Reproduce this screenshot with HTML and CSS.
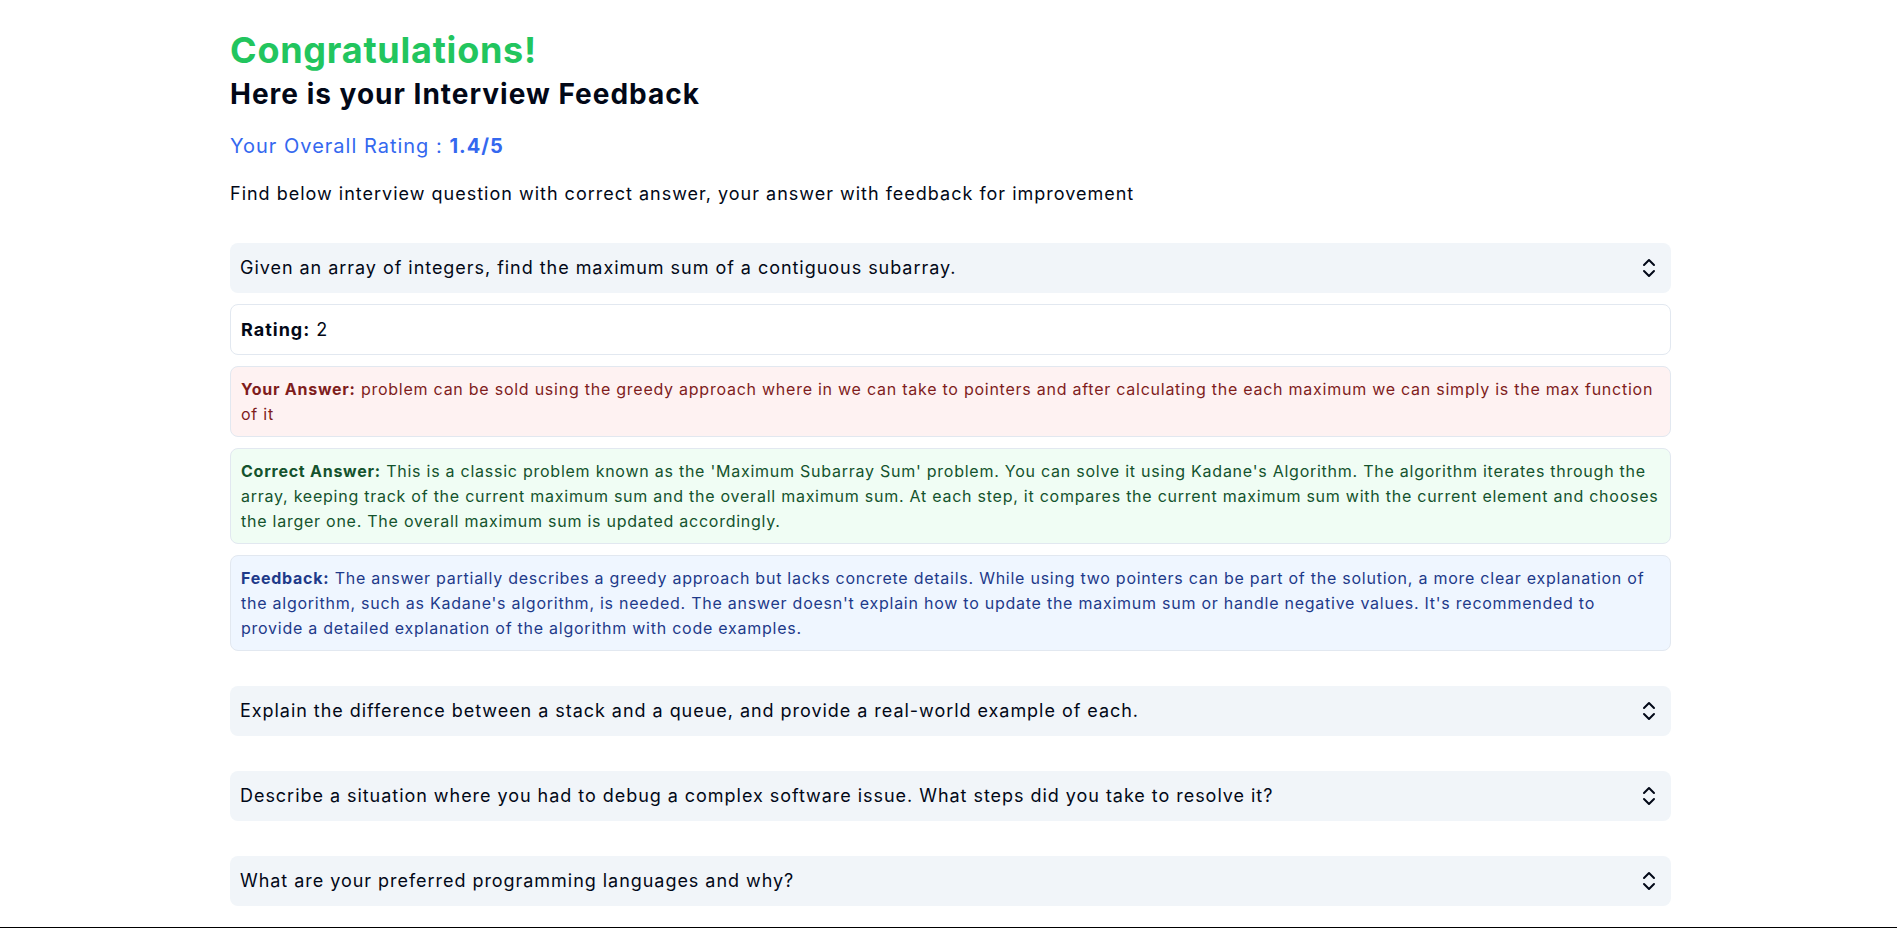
FILE: index.html
```html
<!DOCTYPE html>
<html lang="en">
<head>
<meta charset="utf-8">
<title>Interview Feedback</title>
<link rel="stylesheet" href="styles.css">
</head>
<body>
<main class="page">
  <h2 class="congrats">Congratulations!</h2>
  <h2 class="subtitle">Here is your Interview Feedback</h2>
  <h2 class="overall">Your Overall Rating : <strong>1.4/5</strong></h2>
  <p class="intro">Find below interview question with correct answer, your answer with feedback for improvement</p>

  <div class="questions">
    <div class="item open">
      <div class="trigger">
        <span>Given an array of integers, find the maximum sum of a contiguous subarray.</span>
        <svg class="chev" viewBox="0 0 24 24" width="24" height="24" fill="none" stroke="currentColor" stroke-width="2" stroke-linecap="round" stroke-linejoin="round"><path d="m7 15 5 5 5-5"/><path d="m7 9 5-5 5 5"/></svg>
      </div>
      <div class="details">
        <div class="box rating"><strong>Rating:</strong> 2</div>
        <div class="box red"><strong>Your Answer:</strong> problem can be sold using the greedy approach where in we can take to pointers and after calculating the each maximum we can simply is the max function of it</div>
        <div class="box green"><strong>Correct Answer:</strong> This is a classic problem known as the 'Maximum Subarray Sum' problem. You can solve it using Kadane's Algorithm. The algorithm iterates through the array, keeping track of the current maximum sum and the overall maximum sum. At each step, it compares the current maximum sum with the current element and chooses the larger one. The overall maximum sum is updated accordingly.</div>
        <div class="box blue"><strong>Feedback:</strong> The answer partially describes a greedy approach but lacks concrete details. While using two pointers can be part of the solution, a more clear explanation of the algorithm, such as Kadane's algorithm, is needed. The answer doesn't explain how to update the maximum sum or handle negative values. It's recommended to provide a detailed explanation of the algorithm with code examples.</div>
      </div>
    </div>

    <div class="item">
      <div class="trigger">
        <span>Explain the difference between a stack and a queue, and provide a real-world example of each.</span>
        <svg class="chev" viewBox="0 0 24 24" width="24" height="24" fill="none" stroke="currentColor" stroke-width="2" stroke-linecap="round" stroke-linejoin="round"><path d="m7 15 5 5 5-5"/><path d="m7 9 5-5 5 5"/></svg>
      </div>
    </div>

    <div class="item">
      <div class="trigger">
        <span>Describe a situation where you had to debug a complex software issue. What steps did you take to resolve it?</span>
        <svg class="chev" viewBox="0 0 24 24" width="24" height="24" fill="none" stroke="currentColor" stroke-width="2" stroke-linecap="round" stroke-linejoin="round"><path d="m7 15 5 5 5-5"/><path d="m7 9 5-5 5 5"/></svg>
      </div>
    </div>

    <div class="item">
      <div class="trigger">
        <span>What are your preferred programming languages and why?</span>
        <svg class="chev" viewBox="0 0 24 24" width="24" height="24" fill="none" stroke="currentColor" stroke-width="2" stroke-linecap="round" stroke-linejoin="round"><path d="m7 15 5 5 5-5"/><path d="m7 9 5-5 5 5"/></svg>
      </div>
    </div>
  </div>
</main>
<footer class="footer"></footer>
</body>
</html>
```

FILE: styles.css
```css
* { box-sizing: border-box; }

html, body {
  margin: 0;
  padding: 0;
  background: #ffffff;
  font-family: Inter, "Noto Sans", "Liberation Sans", sans-serif;
  color: #020817;
}

.page {
  padding: 30px 226px 21px 230px;
}

.congrats {
  margin: 0;
  font-size: 36px;
  line-height: 40px;
  font-weight: 700;
  letter-spacing: 0.75px;
  color: #22c55e;
}

.subtitle {
  margin: 8px 0 0;
  font-size: 28px;
  line-height: 32px;
  font-weight: 700;
  letter-spacing: 1px;
  color: #020817;
}

.overall {
  margin: 22px 0 0;
  font-size: 20px;
  line-height: 28px;
  font-weight: 400;
  letter-spacing: 1px;
  color: #3468ef;
}

.overall strong { font-weight: 700; }

.intro {
  margin: 20px 0 0;
  font-size: 18px;
  line-height: 28px;
  letter-spacing: 1px;
}

.questions {
  margin-top: 35px;
  display: flex;
  flex-direction: column;
  gap: 35px;
}

.trigger {
  height: 50px;
  display: flex;
  align-items: center;
  justify-content: space-between;
  padding: 0 10px;
  background: #f1f5f9;
  border-radius: 8px;
  font-size: 18px;
  line-height: 28px;
  letter-spacing: 0.96px;
}

.chev { flex: none; }

.details {
  margin-top: 11px;
  display: flex;
  flex-direction: column;
  gap: 11px;
}

.box {
  border: 1px solid #e2e8f0;
  border-radius: 8px;
  padding: 9.5px 10px;
  font-size: 16px;
  line-height: 25px;
  letter-spacing: 0.75px;
}

.box.rating {
  font-size: 18px;
  line-height: 28px;
  padding: 10.5px 10px;
  letter-spacing: 1px;
  background: #ffffff;
}

.box.red { background: #fef2f2; color: #7f1d1d; }
.box.green { background: #f0fdf4; color: #14532d; }
.box.blue { background: #eff6ff; color: #1e3a8a; }

.footer {
  border-top: 1px solid #000;
  height: 40px;
}
```
